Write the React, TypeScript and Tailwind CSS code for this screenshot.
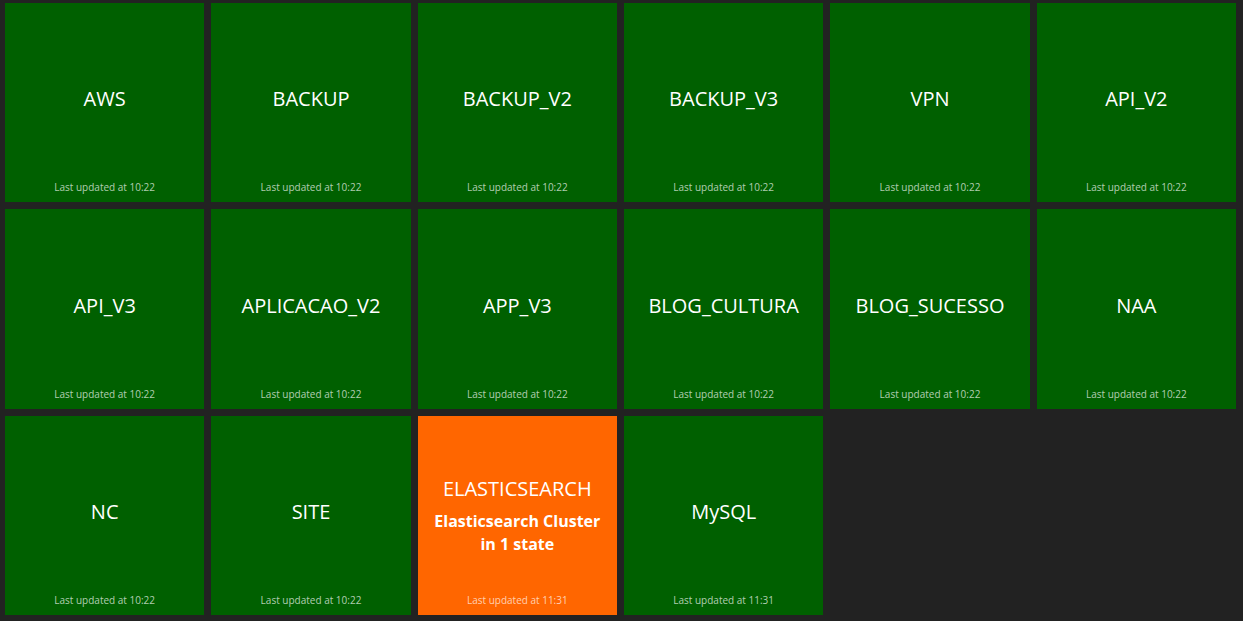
const tiles: { title: string; text?: string; updated: string; warn?: boolean }[] = [
  { title: 'AWS', updated: '10:22' },
  { title: 'BACKUP', updated: '10:22' },
  { title: 'BACKUP_V2', updated: '10:22' },
  { title: 'BACKUP_V3', updated: '10:22' },
  { title: 'VPN', updated: '10:22' },
  { title: 'API_V2', updated: '10:22' },
  { title: 'API_V3', updated: '10:22' },
  { title: 'APLICACAO_V2', updated: '10:22' },
  { title: 'APP_V3', updated: '10:22' },
  { title: 'BLOG_CULTURA', updated: '10:22' },
  { title: 'BLOG_SUCESSO', updated: '10:22' },
  { title: 'NAA', updated: '10:22' },
  { title: 'NC', updated: '10:22' },
  { title: 'SITE', updated: '10:22' },
  { title: 'ELASTICSEARCH', text: 'Elasticsearch Cluster in 1 state', updated: '11:31', warn: true },
  { title: 'MySQL', updated: '11:31' },
];

function Tile({ title, text, updated, warn }: (typeof tiles)[number]) {
  return (
    <div
      className={`relative h-[199.4px] flex flex-col items-center justify-center text-center text-white ${
        warn ? 'bg-[#ff6600]' : 'bg-[#006000]'
      }`}
    >
      <h1 className="text-[20px] leading-[28px] mb-[7px]">{title}</h1>
      {text && <h3 className="text-[16px] leading-[23px] font-bold px-[12px]">{text}</h3>}
      <p className="absolute bottom-[8px] left-0 right-0 text-[10px] leading-[14px] text-white/70">
        Last updated at {updated}
      </p>
    </div>
  );
}

export default function App() {
  return (
    <div
      className="min-h-[621px] w-[1243px] bg-[#222222] pt-[3px] pl-[5px] pr-[7px]"
      style={{ fontFamily: '"Open Sans", "Noto Sans", sans-serif' }}
    >
      <div className="grid grid-cols-6 gap-x-[7px] gap-y-[7px]">
        {tiles.map(t => (
          <Tile key={t.title} {...t} />
        ))}
      </div>
    </div>
  );
}
